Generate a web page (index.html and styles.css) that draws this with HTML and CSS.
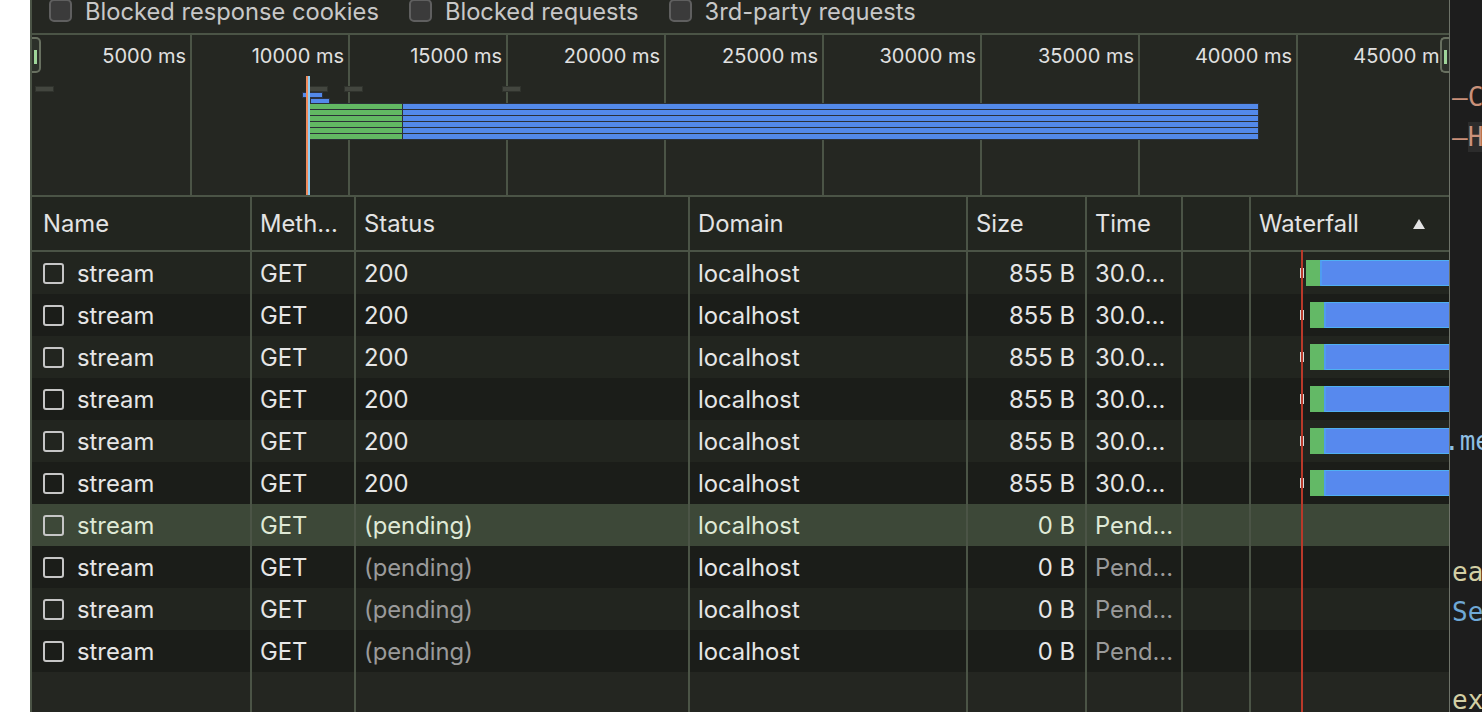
FILE: index.html
```html
<!DOCTYPE html>
<html>
<head>
<meta charset="utf-8">
<title>Network</title>
<link rel="stylesheet" href="styles.css">
</head>
<body>
<div class="gutter"></div>
<div class="devtools">
  <div class="toolbar">
    <div class="toolbar-inner">
      <label class="tb-check"><span class="box"></span>Blocked response cookies</label>
      <label class="tb-check"><span class="box"></span>Blocked requests</label>
      <label class="tb-check"><span class="box"></span>3rd-party requests</label>
    </div>
  </div>

  <div class="overview">
    <div class="ticks">
      <div class="tick">5000 ms</div>
      <div class="tick">10000 ms</div>
      <div class="tick">15000 ms</div>
      <div class="tick">20000 ms</div>
      <div class="tick">25000 ms</div>
      <div class="tick">30000 ms</div>
      <div class="tick">35000 ms</div>
      <div class="tick">40000 ms</div>
      <div class="tick">45000 ms</div>
    </div>
    <div class="ov-dash d1"></div>
    <div class="ov-dash d2"></div>
    <div class="ov-dash d3"></div>
    <div class="ov-dash d4"></div>
    <div class="ov-small s1"></div>
    <div class="ov-small s2"></div>
    <div class="ov-stack">
      <div class="ov-row"><span class="ov-g"></span><span class="ov-b"></span></div>
      <div class="ov-row"><span class="ov-g"></span><span class="ov-b"></span></div>
      <div class="ov-row"><span class="ov-g"></span><span class="ov-b"></span></div>
      <div class="ov-row"><span class="ov-g"></span><span class="ov-b"></span></div>
      <div class="ov-row"><span class="ov-g"></span><span class="ov-b"></span></div>
      <div class="ov-row"><span class="ov-g"></span><span class="ov-b"></span></div>
    </div>
    <div class="ov-line orange"></div>
    <div class="ov-line lblue"></div>
    <div class="handle left"><span></span></div>
    <div class="handle right"><span></span></div>
  </div>

  <div class="table">
    <div class="row head">
      <div>Name</div>
      <div>Meth…</div>
      <div>Status</div>
      <div>Domain</div>
      <div>Size</div>
      <div>Time</div>
      <div></div>
      <div class="wf-head">Waterfall<svg class="sort" width="12" height="10" viewBox="0 0 12 10"><polygon points="6,0 12,10 0,10" fill="#e3e3e3"/></svg></div>
    </div>

    <div class="row odd">
      <div class="name"><span class="cb"></span>stream</div><div>GET</div><div>200</div><div>localhost</div><div class="num">855 B</div><div>30.0…</div><div></div>
      <div class="wf"><span class="tk"></span><span class="g first"></span><span class="b"></span></div>
    </div>
    <div class="row even">
      <div class="name"><span class="cb"></span>stream</div><div>GET</div><div>200</div><div>localhost</div><div class="num">855 B</div><div>30.0…</div><div></div>
      <div class="wf"><span class="tk"></span><span class="g"></span><span class="b"></span></div>
    </div>
    <div class="row odd">
      <div class="name"><span class="cb"></span>stream</div><div>GET</div><div>200</div><div>localhost</div><div class="num">855 B</div><div>30.0…</div><div></div>
      <div class="wf"><span class="tk"></span><span class="g"></span><span class="b"></span></div>
    </div>
    <div class="row even">
      <div class="name"><span class="cb"></span>stream</div><div>GET</div><div>200</div><div>localhost</div><div class="num">855 B</div><div>30.0…</div><div></div>
      <div class="wf"><span class="tk"></span><span class="g"></span><span class="b"></span></div>
    </div>
    <div class="row odd">
      <div class="name"><span class="cb"></span>stream</div><div>GET</div><div>200</div><div>localhost</div><div class="num">855 B</div><div>30.0…</div><div></div>
      <div class="wf"><span class="tk"></span><span class="g"></span><span class="b"></span></div>
    </div>
    <div class="row even">
      <div class="name"><span class="cb"></span>stream</div><div>GET</div><div>200</div><div>localhost</div><div class="num">855 B</div><div>30.0…</div><div></div>
      <div class="wf"><span class="tk"></span><span class="g"></span><span class="b"></span></div>
    </div>
    <div class="row selected">
      <div class="name"><span class="cb"></span>stream</div><div>GET</div><div>(pending)</div><div>localhost</div><div class="num">0 B</div><div>Pend…</div><div></div><div></div>
    </div>
    <div class="row even">
      <div class="name"><span class="cb"></span>stream</div><div>GET</div><div class="dim">(pending)</div><div>localhost</div><div class="num">0 B</div><div class="dim">Pend…</div><div></div><div></div>
    </div>
    <div class="row odd">
      <div class="name"><span class="cb"></span>stream</div><div>GET</div><div class="dim">(pending)</div><div>localhost</div><div class="num">0 B</div><div class="dim">Pend…</div><div></div><div></div>
    </div>
    <div class="row even">
      <div class="name"><span class="cb"></span>stream</div><div>GET</div><div class="dim">(pending)</div><div>localhost</div><div class="num">0 B</div><div class="dim">Pend…</div><div></div><div></div>
    </div>
    <div class="row filler">
      <div></div><div></div><div></div><div></div><div></div><div></div><div></div><div></div>
    </div>
    <div class="redline"></div>
  </div>
</div>

<div class="editor">
  <div class="ln str">—Co</div>
  <div class="ln str">—<span class="hl">H</span>i</div>
  <div class="ln prop l-me">.me</div>
  <div class="ln fn l-ea">ea</div>
  <div class="ln type">Se</div>
  <div class="ln fn l-ex">ex</div>
</div>
</body>
</html>
```

FILE: styles.css
```css
* { box-sizing: border-box; }

html, body {
  margin: 0;
  padding: 0;
}

body {
  display: flex;
  width: 1482px;
  height: 712px;
  overflow: hidden;
  background: #ffffff;
  font-family: Inter, "Liberation Sans", sans-serif;
  color: #e6e6e6;
}

.gutter {
  width: 30px;
  flex: none;
  background: #ffffff;
}

.devtools {
  width: 1420px;
  flex: none;
  display: flex;
  flex-direction: column;
  background: #252722;
  border-left: 2px solid #4b5446;
  border-right: 1px solid #6d7268;
  overflow: hidden;
}

/* toolbar */
.toolbar {
  height: 35px;
  flex: none;
  border-bottom: 2px solid #4b5446;
  overflow: hidden;
}

.toolbar-inner {
  display: flex;
  align-items: center;
  gap: 30px;
  height: 24px;
  margin-top: -1px;
  padding-left: 17px;
  font-size: 23.7px;
  color: #c8c8c8;
}

.tb-check {
  display: flex;
  align-items: center;
  gap: 13px;
  white-space: nowrap;
}

.tb-check .box {
  width: 23px;
  height: 23px;
  margin-top: -2px;
  border: 2px solid #5f5f5f;
  border-radius: 5px;
  background: #3b3b3b;
}

/* overview */
.overview {
  position: relative;
  height: 162px;
  flex: none;
  padding-left: 2px;
  border-bottom: 2px solid #4b5446;
  overflow: hidden;
}

.ticks {
  display: flex;
  height: 100%;
}

.tick {
  width: 158px;
  flex: none;
  padding: 9px 4px 0 0;
  border-right: 2px solid #4b5446;
  text-align: right;
  font-size: 20px;
  color: #e0e0e0;
  white-space: nowrap;
}

.ov-dash {
  position: absolute;
  top: 51px;
  width: 19px;
  height: 6px;
  background: #43463f;
  border: 1px solid #30332d;
}
.ov-dash.d1 { left: 3px; }
.ov-dash.d2 { left: 277px; }
.ov-dash.d3 { left: 312px; }
.ov-dash.d4 { left: 470px; }

.ov-small {
  position: absolute;
  height: 6px;
  background: #5389ea;
  border: 1px solid #2b3140;
}
.ov-small.s1 { left: 270px; top: 57px; width: 21px; }
.ov-small.s2 { left: 278px; top: 63px; width: 20px; }

.ov-stack {
  position: absolute;
  left: 276px;
  top: 68px;
  display: flex;
  flex-direction: column;
}

.ov-row {
  display: flex;
  height: 6px;
}

.ov-g, .ov-b {
  display: block;
  height: 7px;
  margin-bottom: -1px;
  border: 1px solid #2b3038;
}
.ov-g { width: 95px; background: #62b863; }
.ov-b { width: 857px; margin-left: -1px; background: #5389ea; }

.ov-line {
  position: absolute;
  top: 41px;
  width: 2px;
  height: 121px;
}
.ov-line.orange { left: 274px; background: #f08b5c; }
.ov-line.lblue { left: 276px; background: #8ecbf2; }

.handle {
  position: absolute;
  top: 2px;
  width: 9px;
  height: 36px;
  border: 2px solid #687060;
  background: #2c302a;
}
.handle.left { left: 0; border-left: none; border-radius: 0 5px 5px 0; }
.handle.right { right: 0; border-right: none; border-radius: 5px 0 0 5px; }
.handle span {
  position: absolute;
  top: 11px;
  width: 3px;
  height: 14px;
  background: #9fd59a;
}
.handle.left span { left: 2px; }
.handle.right span { left: 2px; }

/* table */
.table {
  position: relative;
  flex: 1;
  background: #242621;
}

.row {
  display: grid;
  grid-template-columns: 218px 104px 334px 278px 119px 96px 68px 200px;
  height: 42px;
  font-size: 23.8px;
}

.row > div {
  display: flex;
  align-items: center;
  padding: 0 8px;
  border-left: 2px solid #4b5446;
  white-space: nowrap;
  overflow: hidden;
}

.row > div:first-child {
  border-left: none;
  padding-left: 11px;
}

.row.head {
  height: 55px;
  background: #22251f;
  border-bottom: 2px solid #4b5446;
  color: #e3e3e3;
}

.row.odd { background: #22251f; }
.row.even { background: #1b1d19; }
.row.selected { background: #3d4838; color: #dfe9d6; }
.row.filler { height: 40px; background: #242621; }

.row > .name { padding-left: 13px; }

.cb {
  width: 21px;
  height: 21px;
  flex: none;
  margin-right: 13px;
  border: 2px solid #c6c6c6;
  border-radius: 3px;
}

.row > .num {
  justify-content: flex-end;
  padding-right: 10px;
}

.row > .dim { color: #9a9a9a; }

.wf-head {
  justify-content: space-between;
  padding-right: 24px !important;
}

.sort { flex: none; margin-top: 1px; }

.row > .wf {
  padding: 0;
  align-items: center;
}

.tk {
  flex: none;
  width: 4px;
  height: 10px;
  margin-left: 49px;
  border-left: 1px solid #d8d8d8;
  border-right: 1px solid #d8d8d8;
}

.g {
  flex: none;
  width: 14px;
  height: 26px;
  margin-left: 6px;
  background: #63b966;
}
.g.first { margin-left: 2px; }

.b {
  flex: none;
  width: 200px;
  height: 26px;
  background: #5789ee;
  border-top: 1px solid #4fb0f2;
  border-bottom: 1px solid #4fb0f2;
  border-left: 2px solid #4f9cf0;
}

.redline {
  position: absolute;
  left: 1269px;
  top: 53px;
  bottom: 0;
  width: 2px;
  background: #b9392a;
}

/* editor side */
.editor {
  flex: 1;
  padding-top: 77px;
  padding-left: 2px;
  background: #1d1d1d;
  overflow: hidden;
  font-family: "DejaVu Sans Mono", "Liberation Mono", monospace;
  font-size: 26px;
  line-height: 40px;
}

.ln { height: 40px; white-space: pre; }
.str { color: #c9917a; }
.prop { color: #8fbfe2; }
.fn { color: #d3cfa4; }
.type { color: #6fa8d6; }
.hl { background: #2c2c2c; }

.l-me { margin-top: 264px; margin-left: -8px; }
.l-ea { margin-top: 91px; }
.l-ex { margin-top: 48px; }
```
